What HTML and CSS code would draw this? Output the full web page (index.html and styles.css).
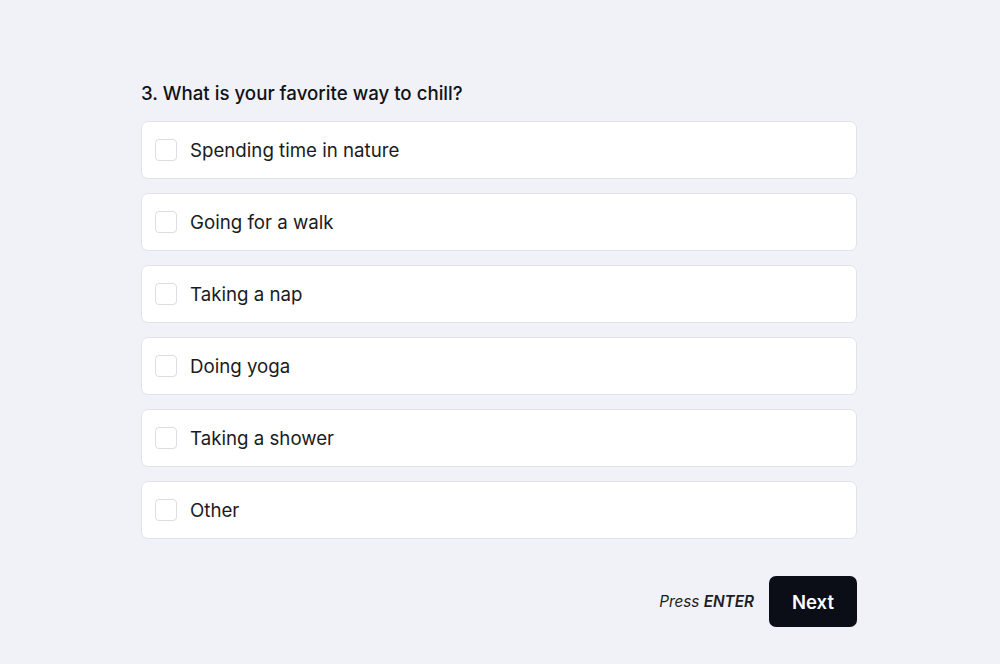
FILE: index.html
```html
<!DOCTYPE html>
<html lang="en">
<head>
<meta charset="utf-8">
<title>Survey</title>
<link rel="stylesheet" href="styles.css">
</head>
<body>
<main class="form">
  <h1 class="question">3. What is your favorite way to chill?</h1>
  <ul class="options">
    <li class="option"><span class="box"></span><span class="label">Spending time in nature</span></li>
    <li class="option"><span class="box"></span><span class="label">Going for a walk</span></li>
    <li class="option"><span class="box"></span><span class="label">Taking a nap</span></li>
    <li class="option"><span class="box"></span><span class="label">Doing yoga</span></li>
    <li class="option"><span class="box"></span><span class="label">Taking a shower</span></li>
    <li class="option"><span class="box"></span><span class="label">Other</span></li>
  </ul>
  <div class="actions">
    <span class="hint">Press <b>ENTER</b></span>
    <button class="next">Next</button>
  </div>
</main>
</body>
</html>
```
FILE: styles.css
```css
html, body {
  margin: 0;
  padding: 0;
}
body {
  background: #f1f2f7;
  font-family: Inter, "Noto Sans", sans-serif;
  color: #16171d;
  width: 1000px;
  height: 664px;
  overflow: hidden;
}
.form {
  width: 716px;
  margin: 0 0 0 141px;
  padding-top: 81px;
}
.question {
  margin: 0;
  font-size: 18.7px;
  line-height: 26px;
  font-weight: 500;
  color: #111218;
}
.options {
  list-style: none;
  margin: 14px 0 0;
  padding: 0;
  display: flex;
  flex-direction: column;
  gap: 14px;
}
.option {
  height: 56px;
  box-sizing: content-box;
  background: #ffffff;
  border: 1px solid #e2e3ea;
  border-radius: 7px;
  display: flex;
  align-items: center;
  padding: 0 13px;
  gap: 13px;
}
.box {
  width: 20px;
  height: 20px;
  border: 1px solid #dcdde3;
  border-radius: 4px;
  background: #fff;
  flex: none;
}
.label {
  font-size: 18.7px;
  color: #1a1b21;
}
.actions {
  margin-top: 37px;
  display: flex;
  justify-content: flex-end;
  align-items: center;
  gap: 15px;
}
.hint {
  font-size: 15.3px;
  font-style: italic;
  color: #1c1d24;
}
.hint b {
  font-weight: 600;
}
.next {
  width: 88px;
  height: 51px;
  border: none;
  border-radius: 7px;
  background: #0b0d17;
  color: #ffffff;
  font-family: Inter, "Noto Sans", sans-serif;
  font-size: 18.5px;
  font-weight: 600;
  cursor: pointer;
}
```
